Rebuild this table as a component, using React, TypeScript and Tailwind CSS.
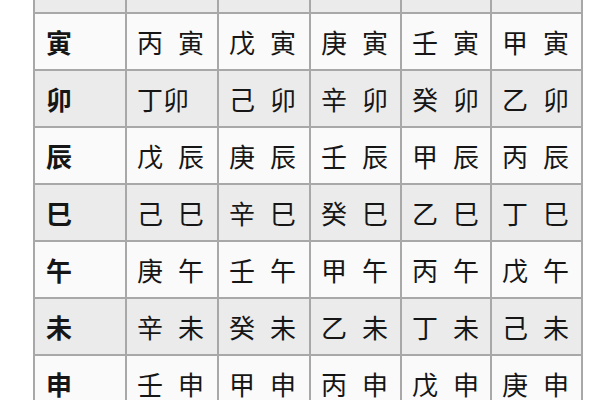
const BRANCHES: { head: string; cells: [string, string, boolean][] }[] = [
  { head: "", cells: [["", "", false], ["", "", false], ["", "", false], ["", "", false], ["", "", false]] },
  { head: "寅", cells: [["丙", "寅", true], ["戊", "寅", true], ["庚", "寅", true], ["壬", "寅", true], ["甲", "寅", true]] },
  { head: "卯", cells: [["丁", "卯", false], ["己", "卯", true], ["辛", "卯", true], ["癸", "卯", true], ["乙", "卯", true]] },
  { head: "辰", cells: [["戊", "辰", true], ["庚", "辰", true], ["壬", "辰", true], ["甲", "辰", true], ["丙", "辰", true]] },
  { head: "巳", cells: [["己", "巳", true], ["辛", "巳", true], ["癸", "巳", true], ["乙", "巳", true], ["丁", "巳", true]] },
  { head: "午", cells: [["庚", "午", true], ["壬", "午", true], ["甲", "午", true], ["丙", "午", true], ["戊", "午", true]] },
  { head: "未", cells: [["辛", "未", true], ["癸", "未", true], ["乙", "未", true], ["丁", "未", true], ["己", "未", true]] },
  { head: "申", cells: [["壬", "申", true], ["甲", "申", true], ["丙", "申", true], ["戊", "申", true], ["庚", "申", true]] },
];

const COL_W = ["w-[92px]", "w-[92px]", "w-[91px]", "w-[90px]", "w-[91px]"];

export default function App() {
  return (
    <div
      className="w-[600px] h-[400px] overflow-hidden bg-white text-[#161616]"
      style={{ fontFamily: '"Noto Sans CJK SC", "Noto Sans", sans-serif' }}
    >
      <table className="ml-[33px] mt-[-45px] border-collapse table-fixed border-2 border-[#a8a8a8]">
        <tbody>
          {BRANCHES.map((row, i) => (
            <tr
              key={i}
              className={`h-[57px] ${i % 2 === 1 ? "bg-[#fafafa]" : "bg-[#ebebeb]"}`}
            >
              <td className="w-[92px] border-2 border-[#a8a8a8] pl-[11px] text-[26px] font-bold leading-none">
                {row.head}
              </td>
              {row.cells.map(([stem, branch, spaced], j) => (
                <td
                  key={j}
                  className={`${COL_W[j]} border-2 border-[#a8a8a8] pl-[10px] text-[26px] leading-none`}
                >
                  <span>{stem}</span>
                  <span className={spaced ? "ml-[15px]" : ""}>{branch}</span>
                </td>
              ))}
            </tr>
          ))}
        </tbody>
      </table>
    </div>
  );
}
